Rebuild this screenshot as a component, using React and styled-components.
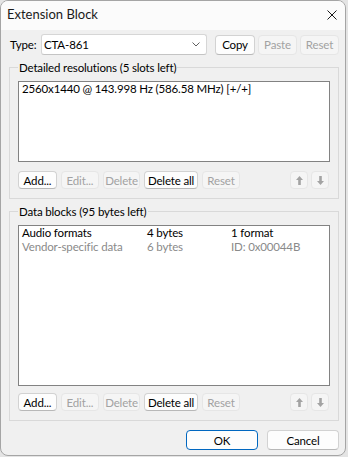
import React from "react";
import styled, { createGlobalStyle } from "styled-components";

const Global = createGlobalStyle`
  html, body { margin: 0; padding: 0; background: #e4e4e4; }
  body {
    font-family: Lato, "Liberation Sans", sans-serif;
    font-size: 11.5px;
    letter-spacing: -0.15px;
    line-height: 15px;
    color: #000;
  }
  * { box-sizing: border-box; }
`;

const Window = styled.div`
  width: 346px;
  height: 456px;
  border: 1px solid #a5a5a5;
  border-radius: 8px;
  background: #f0f0f0;
  overflow: hidden;
  display: flex;
  flex-direction: column;
`;

const TitleBar = styled.div`
  height: 29px;
  flex: none;
  background: #fbfbfb;
  display: flex;
  align-items: center;
  justify-content: space-between;
  padding: 0 8px 2px 6px;
`;

const Title = styled.span`
  color: #1a1a1a;
  font-size: 13px;
  letter-spacing: 0;
`;

const Body = styled.div`
  flex: 1;
  display: flex;
  flex-direction: column;
  padding: 4px 6px 0 8px;
`;

const TypeRow = styled.div`
  display: flex;
  align-items: center;
  height: 21px;
`;

const Label = styled.span`
  width: 32px;
  padding-left: 1px;
`;

const Combo = styled.div`
  width: 166px;
  height: 21px;
  background: #fff;
  border: 1px solid #d6d6d6;
  border-bottom-color: #c4c4c4;
  border-radius: 3px;
  display: flex;
  align-items: center;
  justify-content: space-between;
  padding: 0 6px 0 2px;
  margin-right: 8px;
`;

const Button = styled.div`
  width: ${(p) => p.$w}px;
  height: ${(p) => p.$h || 18}px;
  margin-left: ${(p) => p.$ml || 0}px;
  flex: none;
  display: flex;
  align-items: center;
  justify-content: center;
  border-radius: 4px;
  border: 1px solid ${(p) => (p.$default ? "#0067c0" : p.$disabled ? "#e6e6e6" : "#d2d2d2")};
  border-bottom-color: ${(p) => (p.$default ? "#0067c0" : p.$disabled ? "#e6e6e6" : "#b8b8b8")};
  background: ${(p) => (p.$disabled ? "#f5f5f5" : "#fdfdfd")};
  color: ${(p) => (p.$disabled ? "#a2a2a2" : "#000")};
  white-space: nowrap;
`;

const Group = styled.fieldset`
  margin: 5px 0 0 0;
  min-width: 0;
  padding: 6px 8px 9px 8px;
  border: 1px solid #d9d9d9;
  display: flex;
  flex-direction: column;
`;

const GroupTitle = styled.legend`
  padding: 0 1px;
  line-height: 15px;
`;

const ListBox = styled.div`
  height: ${(p) => p.$h}px;
  background: #fff;
  border: 1px solid #828282;
  padding: 0 3px;
`;

const ListRow = styled.div`
  height: 14px;
  line-height: 14px;
  display: grid;
  grid-template-columns: ${(p) => p.$cols || "1fr"};
  color: ${(p) => (p.$muted ? "#8a8a8a" : "#000")};
  white-space: nowrap;
`;

const ButtonRow = styled.div`
  display: flex;
  align-items: center;
  gap: 4px;
  margin-top: ${(p) => p.$mt}px;
`;

const Spacer = styled.div`
  flex: 1;
`;

const ArrowPair = styled.div`
  display: flex;
  gap: 3px;
  margin-right: 1px;
`;

const Footer = styled.div`
  display: flex;
  justify-content: flex-end;
  gap: 9px;
  margin-top: 9px;
`;

const CloseIcon = () => (
  <svg width="10" height="10" viewBox="0 0 10 10">
    <path d="M0.5 0.5 L9.5 9.5 M9.5 0.5 L0.5 9.5" stroke="#1a1a1a" strokeWidth="1" />
  </svg>
);

const Chevron = () => (
  <svg width="8" height="5" viewBox="0 0 8 5">
    <polyline points="0.5,0.5 4,4 7.5,0.5" fill="none" stroke="#606060" strokeWidth="1" />
  </svg>
);

const Arrow = ({ down }) => (
  <svg width="7" height="9" viewBox="0 0 7 9" style={down ? { transform: "rotate(180deg)" } : undefined}>
    <path d="M3.5 0 L7 4 H4.8 V9 H2.2 V4 H0 Z" fill="#a3a3a3" />
  </svg>
);

const ListButtons = ({ mt }) => (
  <ButtonRow $mt={mt}>
    <Button $w={39}>Add...</Button>
    <Button $w={38} $disabled>Edit...</Button>
    <Button $w={37} $disabled>Delete</Button>
    <Button $w={54}>Delete all</Button>
    <Button $w={38} $disabled>Reset</Button>
    <Spacer />
    <ArrowPair>
      <Button $w={18} $disabled>
        <Arrow />
      </Button>
      <Button $w={18} $disabled>
        <Arrow down />
      </Button>
    </ArrowPair>
  </ButtonRow>
);

const cols = "125px 84px 1fr";

export default function App() {
  return (
    <>
      <Global />
      <Window>
        <TitleBar>
          <Title>Extension Block</Title>
          <CloseIcon />
        </TitleBar>
        <Body>
          <TypeRow>
            <Label>Type:</Label>
            <Combo>
              <span>CTA-861</span>
              <Chevron />
            </Combo>
            <Button $w={40} $h={20}>Copy</Button>
            <Button $w={39} $h={20} $ml={3} $disabled>Paste</Button>
            <Button $w={39} $h={20} $ml={3} $disabled>Reset</Button>
          </TypeRow>

          <Group>
            <GroupTitle>Detailed resolutions (5 slots left)</GroupTitle>
            <ListBox $h={81}>
              <ListRow>2560x1440 @ 143.998 Hz (586.58 MHz) [+/+]</ListRow>
            </ListBox>
            <ListButtons mt={9} />
          </Group>

          <Group>
            <GroupTitle>Data blocks (95 bytes left)</GroupTitle>
            <ListBox $h={161}>
              <ListRow $cols={cols}>
                <span>Audio formats</span>
                <span>4 bytes</span>
                <span>1 format</span>
              </ListRow>
              <ListRow $cols={cols} $muted>
                <span>Vendor-specific data</span>
                <span>6 bytes</span>
                <span>ID: 0x00044B</span>
              </ListRow>
            </ListBox>
            <ListButtons mt={7} />
          </Group>

          <Footer>
            <Button $w={72} $h={20} $default>OK</Button>
            <Button $w={72} $h={20}>Cancel</Button>
          </Footer>
        </Body>
      </Window>
    </>
  );
}
